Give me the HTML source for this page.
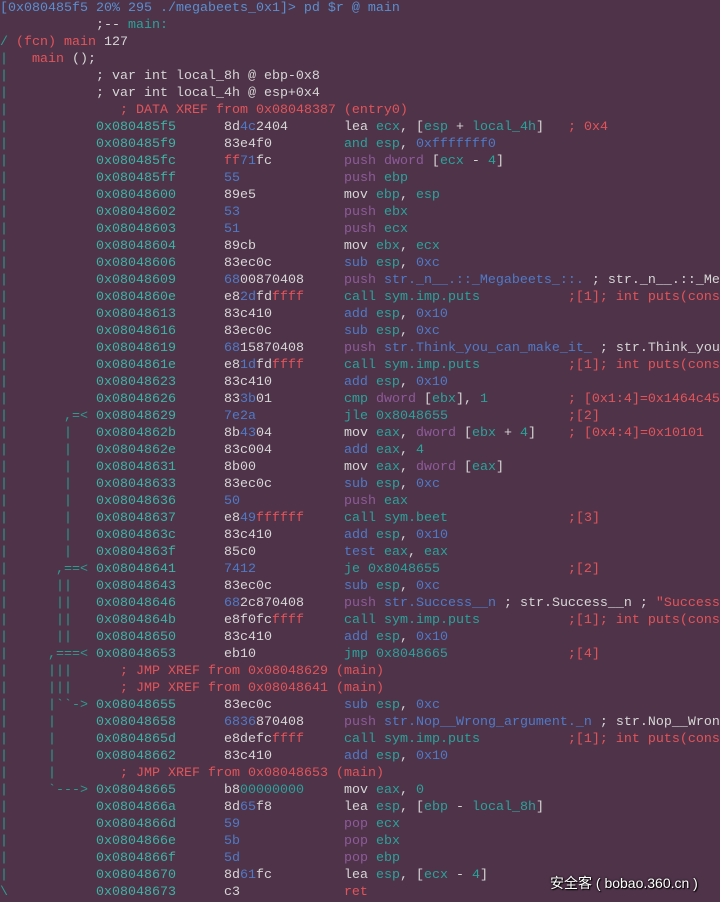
<!DOCTYPE html>
<html><head><meta charset="utf-8"><style>
html,body{margin:0;padding:0;background:#4f3349;width:720px;height:902px;overflow:hidden}
pre{margin:0;padding:0;font-family:"Liberation Mono",monospace;font-size:13.33px;line-height:17px;color:#d6d6d6;white-space:pre;overflow:hidden;width:720px}
.A{color:#3cb4a4}.W{color:#d6d6d6}.R{color:#e2545a}.B{color:#4f7ac8}.P{color:#8d5b9a}.T{color:#2aa39a}.L{color:#2a9d8f}.H{color:#5a8fd0}
.wm{position:absolute;left:550px;top:873px;font-family:"Liberation Sans","Noto Sans CJK SC",sans-serif;font-size:14px;color:#fff;text-shadow:1px 1px 1px #000,0 0 2px #000}
</style></head><body>
<pre><span class="H">[0x080485f5 20% 295 ./megabeets_0x1]&gt; pd $r @ main</span>
            ;-- <span class="T">main:</span>
<span class="L">/</span> <span class="R">(fcn) main</span> 127
<span class="L">|</span>   <span class="R">main</span> ();
<span class="L">|</span>           ; var int local_8h @ ebp-0x8
<span class="L">|</span>           ; var int local_4h @ esp+0x4
<span class="L">|</span>              <span class="R">; DATA XREF from 0x08048387 (entry0)</span>
<span class="L">|</span>           <span class="A">0x080485f5</span>      8d<span class="B">4c</span>2404       lea <span class="T">ecx</span>, [<span class="T">esp</span> + <span class="T">local_4h</span>]   <span class="R">; 0x4</span>
<span class="L">|</span>           <span class="A">0x080485f9</span>      83e4f0         <span class="T">and esp</span>, <span class="B">0xfffffff0</span>
<span class="L">|</span>           <span class="A">0x080485fc</span>      <span class="R">ff</span><span class="B">71</span>fc         <span class="P">push dword</span> [<span class="T">ecx</span> - <span class="T">4</span>]
<span class="L">|</span>           <span class="A">0x080485ff</span>      <span class="B">55</span>             <span class="P">push</span> <span class="T">ebp</span>
<span class="L">|</span>           <span class="A">0x08048600</span>      89e5           mov <span class="T">ebp</span>, <span class="T">esp</span>
<span class="L">|</span>           <span class="A">0x08048602</span>      <span class="B">53</span>             <span class="P">push</span> <span class="T">ebx</span>
<span class="L">|</span>           <span class="A">0x08048603</span>      <span class="B">51</span>             <span class="P">push</span> <span class="T">ecx</span>
<span class="L">|</span>           <span class="A">0x08048604</span>      89cb           mov <span class="T">ebx</span>, <span class="T">ecx</span>
<span class="L">|</span>           <span class="A">0x08048606</span>      83ec0c         <span class="B">sub</span> <span class="T">esp</span>, <span class="B">0xc</span>
<span class="L">|</span>           <span class="A">0x08048609</span>      <span class="B">68</span>00870408     <span class="P">push</span> <span class="B">str._n__.::_Megabeets_::.</span> ; str._n__.::_Megabeets_::.
<span class="L">|</span>           <span class="A">0x0804860e</span>      e8<span class="B">2d</span>fd<span class="R">ffff</span>     <span class="T">call sym.imp.puts</span>           <span class="R">;[1]; int puts(const char *s)</span>
<span class="L">|</span>           <span class="A">0x08048613</span>      83c410         <span class="B">add</span> <span class="T">esp</span>, <span class="B">0x10</span>
<span class="L">|</span>           <span class="A">0x08048616</span>      83ec0c         <span class="B">sub</span> <span class="T">esp</span>, <span class="B">0xc</span>
<span class="L">|</span>           <span class="A">0x08048619</span>      <span class="B">68</span>15870408     <span class="P">push</span> <span class="B">str.Think_you_can_make_it_</span> ; str.Think_you_can_make_it_
<span class="L">|</span>           <span class="A">0x0804861e</span>      e8<span class="B">1d</span>fd<span class="R">ffff</span>     <span class="T">call sym.imp.puts</span>           <span class="R">;[1]; int puts(const char *s)</span>
<span class="L">|</span>           <span class="A">0x08048623</span>      83c410         <span class="B">add</span> <span class="T">esp</span>, <span class="B">0x10</span>
<span class="L">|</span>           <span class="A">0x08048626</span>      83<span class="B">3b</span>01         <span class="T">cmp</span> <span class="P">dword</span> [<span class="T">ebx</span>], <span class="T">1</span>          <span class="R">; [0x1:4]=0x1464c45</span>
<span class="L">|</span>       <span class="L">,=&lt;</span> <span class="A">0x08048629</span>      <span class="B">7e2a</span>           <span class="T">jle 0x8048655</span>               <span class="R">;[2]</span>
<span class="L">|</span>       <span class="L">|</span>   <span class="A">0x0804862b</span>      8b<span class="B">43</span>04         mov <span class="T">eax</span>, <span class="P">dword</span> [<span class="T">ebx</span> + <span class="T">4</span>]    <span class="R">; [0x4:4]=0x10101</span>
<span class="L">|</span>       <span class="L">|</span>   <span class="A">0x0804862e</span>      83c004         <span class="B">add</span> <span class="T">eax</span>, <span class="T">4</span>
<span class="L">|</span>       <span class="L">|</span>   <span class="A">0x08048631</span>      8b00           mov <span class="T">eax</span>, <span class="P">dword</span> [<span class="T">eax</span>]
<span class="L">|</span>       <span class="L">|</span>   <span class="A">0x08048633</span>      83ec0c         <span class="B">sub</span> <span class="T">esp</span>, <span class="B">0xc</span>
<span class="L">|</span>       <span class="L">|</span>   <span class="A">0x08048636</span>      <span class="B">50</span>             <span class="P">push</span> <span class="T">eax</span>
<span class="L">|</span>       <span class="L">|</span>   <span class="A">0x08048637</span>      e8<span class="B">49</span><span class="R">ffffff</span>     <span class="T">call sym.beet</span>               <span class="R">;[3]</span>
<span class="L">|</span>       <span class="L">|</span>   <span class="A">0x0804863c</span>      83c410         <span class="B">add</span> <span class="T">esp</span>, <span class="B">0x10</span>
<span class="L">|</span>       <span class="L">|</span>   <span class="A">0x0804863f</span>      85c0           <span class="B">test</span> <span class="T">eax</span>, <span class="T">eax</span>
<span class="L">|</span>      <span class="L">,==&lt;</span> <span class="A">0x08048641</span>      <span class="B">7412</span>           <span class="T">je 0x8048655</span>                <span class="R">;[2]</span>
<span class="L">|</span>      <span class="L">||</span>   <span class="A">0x08048643</span>      83ec0c         <span class="B">sub</span> <span class="T">esp</span>, <span class="B">0xc</span>
<span class="L">|</span>      <span class="L">||</span>   <span class="A">0x08048646</span>      <span class="B">68</span>2c870408     <span class="P">push</span> <span class="B">str.Success__n</span> ; str.Success__n ; <span class="R">"Success\n"</span>
<span class="L">|</span>      <span class="L">||</span>   <span class="A">0x0804864b</span>      e8f0fc<span class="R">ffff</span>     <span class="T">call sym.imp.puts</span>           <span class="R">;[1]; int puts(const char *s)</span>
<span class="L">|</span>      <span class="L">||</span>   <span class="A">0x08048650</span>      83c410         <span class="B">add</span> <span class="T">esp</span>, <span class="B">0x10</span>
<span class="L">|</span>     <span class="L">,===&lt;</span> <span class="A">0x08048653</span>      eb10           <span class="T">jmp 0x8048665</span>               <span class="R">;[4]</span>
<span class="L">|</span>     <span class="L">|||</span>      <span class="R">; JMP XREF from 0x08048629 (main)</span>
<span class="L">|</span>     <span class="L">|||</span>      <span class="R">; JMP XREF from 0x08048641 (main)</span>
<span class="L">|</span>     <span class="L">|``-&gt;</span> <span class="A">0x08048655</span>      83ec0c         <span class="B">sub</span> <span class="T">esp</span>, <span class="B">0xc</span>
<span class="L">|</span>     <span class="L">|</span>     <span class="A">0x08048658</span>      <span class="B">6836</span>870408     <span class="P">push</span> <span class="B">str.Nop__Wrong_argument._n</span> ; str.Nop__Wrong_argument._n
<span class="L">|</span>     <span class="L">|</span>     <span class="A">0x0804865d</span>      e8defc<span class="R">ffff</span>     <span class="T">call sym.imp.puts</span>           <span class="R">;[1]; int puts(const char *s)</span>
<span class="L">|</span>     <span class="L">|</span>     <span class="A">0x08048662</span>      83c410         <span class="B">add</span> <span class="T">esp</span>, <span class="B">0x10</span>
<span class="L">|</span>     <span class="L">|</span>        <span class="R">; JMP XREF from 0x08048653 (main)</span>
<span class="L">|</span>     <span class="L">`---&gt;</span> <span class="A">0x08048665</span>      b8<span class="T">00000000</span>     mov <span class="T">eax</span>, <span class="T">0</span>
<span class="L">|</span>           <span class="A">0x0804866a</span>      8d<span class="B">65</span>f8         lea <span class="T">esp</span>, [<span class="T">ebp</span> - <span class="T">local_8h</span>]
<span class="L">|</span>           <span class="A">0x0804866d</span>      <span class="B">59</span>             <span class="P">pop</span> <span class="T">ecx</span>
<span class="L">|</span>           <span class="A">0x0804866e</span>      <span class="B">5b</span>             <span class="P">pop</span> <span class="T">ebx</span>
<span class="L">|</span>           <span class="A">0x0804866f</span>      <span class="B">5d</span>             <span class="P">pop</span> <span class="T">ebp</span>
<span class="L">|</span>           <span class="A">0x08048670</span>      8d<span class="B">61</span>fc         lea <span class="T">esp</span>, [<span class="T">ecx</span> - <span class="T">4</span>]
<span class="L">\</span>           <span class="A">0x08048673</span>      c3             <span class="R">ret</span></pre>
<div class="wm">安全客 ( bobao.360.cn )</div>
</body></html>
